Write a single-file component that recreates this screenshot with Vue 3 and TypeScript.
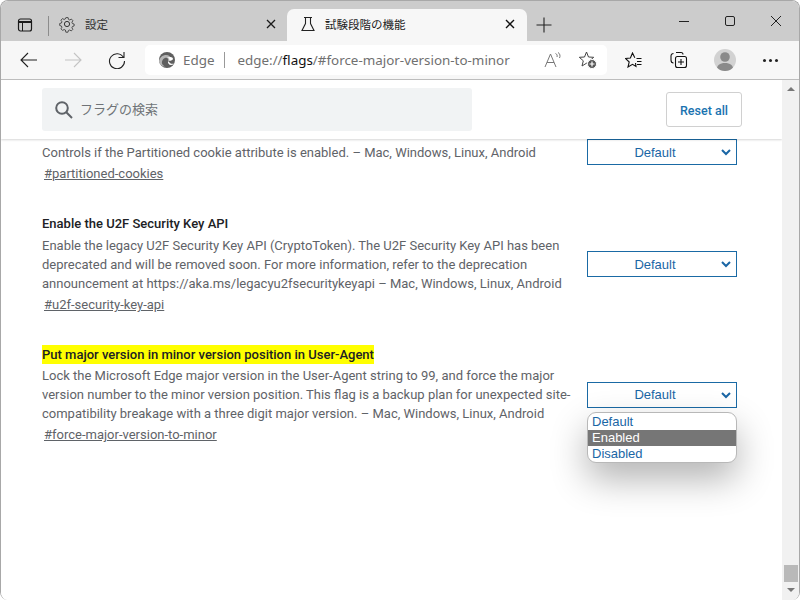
<script setup lang="ts">
interface Flag {
  title: string
  lines: string[]
  anchor: string
  highlight?: boolean
  open?: boolean
}

const flags: Flag[] = [
  {
    title: 'Partitioned cookies',
    lines: ['Controls if the Partitioned cookie attribute is enabled. – Mac, Windows, Linux, Android'],
    anchor: '#partitioned-cookies',
  },
  {
    title: 'Enable the U2F Security Key API',
    lines: [
      'Enable the legacy U2F Security Key API (CryptoToken). The U2F Security Key API has been',
      'deprecated and will be removed soon. For more information, refer to the deprecation',
      'announcement at https://aka.ms/legacyu2fsecuritykeyapi – Mac, Windows, Linux, Android',
    ],
    anchor: '#u2f-security-key-api',
  },
  {
    title: 'Put major version in minor version position in User-Agent',
    lines: [
      'Lock the Microsoft Edge major version in the User-Agent string to 99, and force the major',
      'version number to the minor version position. This flag is a backup plan for unexpected site-',
      'compatibility breakage with a three digit major version. – Mac, Windows, Linux, Android',
    ],
    anchor: '#force-major-version-to-minor',
    highlight: true,
    open: true,
  },
]
const options = ['Default', 'Enabled', 'Disabled']
</script>

<template>
  <div class="window">
    <div class="tabstrip">
      <svg class="ic sidebar" width="16" height="16" viewBox="0 0 16 16" fill="none" stroke="#1a1a1a">
        <rect x="1.5" y="2" width="13" height="12" rx="2" stroke-width="1.2" />
        <path d="M1.5 5h13" stroke-width="2.2" />
        <path d="M5.5 5v9" stroke-width="1" />
      </svg>
      <span class="divider"></span>
      <div class="tab inactive">
        <svg width="18" height="18" viewBox="0 0 18 18" fill="none" stroke="#333" stroke-width="1">
          <circle cx="9" cy="9" r="2.6" />
          <path d="M7.6 1.500h2.800l.5 2.200 1.500.7 2-1.100 1.900 2-1.200 1.900.6 1.600 2.100.6v2.400l-2.100.7-.6 1.500 1.100 2-1.900 1.900-2-1.100-1.500.6-.6 2.100H7.600L7 16.800l-1.500-.6-2 1.100-1.900-1.900 1.100-2-.6-1.500-2.100-.7V8.800l2.100-.6.6-1.600-1.200-1.900 1.900-2 2 1.100 1.500-.7z" transform="translate(1.700 1.400) scale(.81)" />
        </svg>
        <span class="tab-title">設定</span>
        <svg class="close" width="10" height="10" viewBox="0 0 10 10" stroke="#1a1a1a" stroke-width="1.300"><path d="M1 1l8 8M9 1l-8 8" /></svg>
      </div>
      <div class="tab active">
        <svg width="16" height="16" viewBox="0 0 16 16" fill="none" stroke="#222" stroke-width="1.100">
          <path d="M4 1.500h8M5.500 1.500v6L2 14.500h12l-3.500-7v-6" />
        </svg>
        <span class="tab-title">試験段階の機能</span>
        <svg class="close" width="10" height="10" viewBox="0 0 10 10" stroke="#111" stroke-width="1.400"><path d="M1 1l8 8M9 1l-8 8" /></svg>
      </div>
      <svg class="newtab" width="16" height="16" viewBox="0 0 16 16" stroke="#222" stroke-width="1.100"><path d="M8 .5v15M.5 8h15" /></svg>
      <div class="caption">
        <svg width="12" height="12" viewBox="0 0 12 12" stroke="#222"><path d="M1 6.500h10" /></svg>
        <svg width="12" height="12" viewBox="0 0 12 12" fill="none" stroke="#222"><rect x="1.500" y="1.500" width="9" height="9" rx="1.500" /></svg>
        <svg width="12" height="12" viewBox="0 0 12 12" stroke="#222"><path d="M1 1l10 10M11 1L1 11" /></svg>
      </div>
    </div>

    <div class="toolbar">
      <svg class="back" width="18" height="16" viewBox="0 0 18 16" fill="none" stroke="#222" stroke-width="1.100"><path d="M17 8H1M8 1L1 8l7 7" /></svg>
      <svg class="forward" width="18" height="16" viewBox="0 0 18 16" fill="none" stroke="#c4c4c4" stroke-width="1.100"><path d="M1 8h16M10 1l7 7-7 7" /></svg>
      <svg class="reload" width="18" height="18" viewBox="0 0 18 18" fill="none" stroke="#222" stroke-width="1.100"><path d="M15.500 6.500A7.500 7.500 0 1 0 16.500 10M16 1v5.500h-5.500" /></svg>
      <div class="omnibox">
        <svg width="16" height="16" viewBox="0 0 16 16">
          <circle cx="8" cy="8" r="8" fill="#5f5f5f" />
          <path d="M0 9c1-4 4-6 7-6 3 0 5 2 5 4 0 1-1 2-3 2 1-2-1-4-3-3-3 1-4 5-2 7 1 1 1 1 2 1.500C3 14.500 0 12 0 9z" fill="#b5b5b5" />
          <path d="M8 6c2-.5 3 1 2 2.500 2 .5 4-.5 4-1.500C14 5 11 4 8 6z" fill="#fff" />
          <path d="M9 9c-.5 2 1 4 3 4 1 0 2-.5 3-1.500-1 .5-3 .5-4-.5z" fill="#fff" />
        </svg>
        <span class="edge">Edge</span>
        <span class="omni-sep"></span>
        <span class="url">edge://<b>flags</b>/#force-major-version-to-minor</span>
        <svg class="read" width="18" height="16" viewBox="0 0 18 16" fill="none" stroke="#777" stroke-width="1"><path d="M1 15L6.500 2 12 15M3 10.500h7" /><path d="M11.500 1.500c1.500.5 2 2 1.500 3.500M14 .5c2 1 2.500 3.500 1.500 5.500" /></svg>
        <svg class="favadd" width="18" height="18" viewBox="0 0 18 18" fill="none" stroke="#444" stroke-width="1"><path d="M7.500 1L9.500 6l5.200.3-4 3.500L12 15l-4.500-2.800L3 15l1.300-5.200-4-3.500L5.500 6z" /><circle cx="13" cy="13" r="4.500" fill="#555" stroke="#fff" /><path d="M13 10.500v5M10.500 13h5" stroke="#fff" stroke-width="1.200" /></svg>
      </div>
      <svg class="favs" width="18" height="16" viewBox="0 0 18 16" fill="none" stroke="#111" stroke-width="1.100"><path d="M9.800 5.800L7.500 1 5.400 6 .5 6.500l3.700 3.500L3 15l4.500-2.700L11 14.500 10.500 11" /><path d="M11.500 6.500h5M12 9.500h4.500M12 12.500h4.500" /></svg>
      <svg class="coll" width="18" height="18" viewBox="0 0 18 18" fill="none" stroke="#111" stroke-width="1.100"><path d="M6 1.500h5a2 2 0 0 1 2 2M3.500 2.500A2.500 2.500 0 0 0 1 5v4c0 1.500 1 3 2.500 3" /><rect x="5.500" y="5.500" width="11" height="11" rx="2" /><path d="M11 8v6M8 11h6" /></svg>
      <div class="avatar">
        <svg width="22" height="22" viewBox="0 0 22 22"><circle cx="11" cy="8" r="4.800" fill="#8a8a8a" /><path d="M2.500 22c0-6 3.500-8 8.500-8s8.500 2 8.500 8z" fill="#8a8a8a" /></svg>
      </div>
      <div class="more"><i></i><i></i><i></i></div>
    </div>

    <div class="viewport">
      <main class="page">
        <header class="search-bar">
          <div class="search">
            <svg width="20" height="20" viewBox="0 0 20 20" fill="none" stroke="#5f6368" stroke-width="2"><circle cx="8" cy="8" r="5.800" /><path d="M12.300 12.300L18 18" /></svg>
            <span>フラグの検索</span>
          </div>
          <button class="reset">Reset all</button>
        </header>
        <section class="list">
          <article v-for="f in flags" :key="f.anchor" class="flag">
            <div class="info">
              <h3 class="title" :class="{ tight: f.highlight }"><span :class="{ mark: f.highlight }">{{ f.title }}</span></h3>
              <p v-for="l in f.lines" :key="l" class="desc">{{ l }}</p>
              <a class="anchor">{{ f.anchor }}</a>
            </div>
            <div class="select-wrap">
              <div class="select">
                <span>Default</span>
                <svg width="10" height="7" viewBox="0 0 10 7" fill="none" stroke="#1a66a5" stroke-width="2"><path d="M1 1l4 4 4-4" /></svg>
              </div>
              <div v-if="f.open" class="menu">
                <div v-for="o in options" :key="o" class="option" :class="{ selected: o === 'Enabled' }">{{ o }}</div>
              </div>
            </div>
          </article>
        </section>
      </main>
      <aside class="scrollbar">
        <i class="arrow up"></i>
        <span class="track"></span>
        <span class="thumb"></span>
        <i class="arrow down"></i>
      </aside>
    </div>
  </div>
</template>

<style>
html, body { margin: 0; padding: 0; background: #fff; }
</style>

<style scoped>
.window {
  width: 800px;
  height: 600px;
  box-sizing: border-box;
  border: 1px solid #a8a8a8;
  border-bottom: 0;
  border-radius: 8px;
  overflow: hidden;
  display: flex;
  flex-direction: column;
  font-family: Roboto, "Noto Sans CJK JP", sans-serif;
}
.tabstrip {
  height: 40px;
  flex: none;
  background: #cccccc;
  display: flex;
  align-items: flex-end;
  position: relative;
}
.sidebar { margin: 0 0 8px 16px; }
.divider { width: 1px; height: 20px; background: #8c8c8c; margin: 0 0 5px 15px; align-self: flex-end; }
.tab {
  height: 32px;
  box-sizing: border-box;
  display: flex;
  align-items: center;
  font-size: 11.500px;
  color: #333;
}
.tab-title { flex: 1; font-family: "Noto Sans CJK JP", sans-serif; letter-spacing: 0; }
.inactive { width: 238px; padding: 0 11px 3px 9px; gap: 9px; }
.active {
  width: 240px;
  padding: 0 12px 3px 13px;
  gap: 9px;
  background: #f7f7f7;
  border-radius: 7px 7px 0 0;
  color: #222;
}
.newtab { margin: 0 0 8px 9px; }
.caption {
  margin-left: auto;
  display: flex;
  gap: 34px;
  padding: 0 17px 14px 0;
  align-self: flex-end;
}
.toolbar {
  height: 39px;
  flex: none;
  box-sizing: border-box;
  background: #f7f7f7;
  border-bottom: 1px solid #bdbdbd;
  display: flex;
  align-items: center;
}
.back { margin-left: 19px; }
.forward { margin-left: 26px; }
.reload { margin-left: 26px; }
.omnibox {
  margin-left: 19px;
  width: 462px;
  height: 30px;
  box-sizing: border-box;
  background: #fff;
  border-radius: 5px;
  display: flex;
  align-items: center;
  padding-left: 14px;
  font-family: "Noto Sans", sans-serif;
  font-size: 13.400px;
  color: #707070;
}
.edge { margin-left: 8px; }
.omni-sep { width: 1px; height: 16px; background: #999; margin: 0 12px 0 10px; }
.url { color: #707070; white-space: nowrap; }
.url b { font-weight: 400; color: #111; }
.read { margin-left: 34px; }
.favadd { margin-left: 17px; }
.favs { margin-left: 18px; }
.coll { margin-left: 27px; }
.avatar {
  margin-left: 26px;
  width: 22px;
  height: 22px;
  border-radius: 50%;
  background: #d2d2d2;
  overflow: hidden;
}
.avatar svg { display: block; }
.more { margin-left: 27px; display: flex; gap: 3px; }
.more i { width: 3px; height: 3px; border-radius: 50%; background: #222; }
.viewport { flex: 1; display: flex; min-height: 0; }
.page { flex: 1; min-width: 0; background: #fff; overflow: hidden; position: relative; }
.search-bar {
  position: relative;
  z-index: 2;
  height: 59px;
  background: #fff;
  box-shadow: 0 1px 2px rgba(0, 0, 0, .16);
  display: flex;
  padding-left: 41px;
  padding-top: 8px;
  box-sizing: border-box;
}
.search {
  width: 430px;
  height: 43px;
  background: #f1f3f4;
  border-radius: 3px;
  display: flex;
  align-items: center;
  padding-left: 12px;
  box-sizing: border-box;
  gap: 6px;
  font-size: 13px;
  color: #6f7377;
  font-family: "Noto Sans CJK JP", sans-serif;
}
.search span { padding-bottom: 2px; }
.reset {
  margin: 4px 0 0 194px;
  width: 76px;
  height: 35px;
  background: #fff;
  border: 1px solid #d0d0d0;
  border-radius: 3px;
  color: #1a73b0;
  font: 500 12.500px Roboto, sans-serif;
  padding: 2px 0 0;
}
.list { padding-left: 41px; margin-top: -18px; }
.flag {
  display: flex;
  align-items: center;
  width: 695px;
  justify-content: space-between;
  margin-bottom: 31px;
}
.info { width: 535px; }
.title {
  margin: 0;
  font: 500 13px/19px Roboto, sans-serif;
  color: #202124;
  padding-bottom: 3px;
}
.title.tight { padding-bottom: 2px; }
.mark { background: #ffff00; padding: 2px 0; }
.desc {
  margin: 0;
  font: 13px/19px Roboto, sans-serif;
  color: #5f6368;
  white-space: nowrap;
}
.anchor {
  display: inline-block;
  margin: 2px 0 0 2px;
  font: 13px/19px Roboto, sans-serif;
  color: #5f6368;
  text-decoration: underline;
}
.select-wrap { width: 150px; position: relative; }
.select {
  height: 26px;
  box-sizing: border-box;
  border: 1px solid #1a6aa5;
  padding-right: 14px;
  display: flex;
  align-items: center;
  position: relative;
  justify-content: center;
  font: 13px "Liberation Sans", sans-serif;
  color: #1a66a5;
}
.select svg { position: absolute; right: 5px; top: 9px; }
.menu {
  position: absolute;
  z-index: 3;
  top: 30px;
  left: 0;
  width: 150px;
  box-sizing: border-box;
  border: 1px solid #b8b8b8;
  border-radius: 9px;
  background: #fff;
  overflow: hidden;
  box-shadow: 0 16px 36px rgba(0, 0, 0, .3);
  padding: 1px 0 0;
}
.option {
  font: 13px/16px "Liberation Sans", sans-serif;
  color: #1a66a5;
  padding-left: 4px;
}
.selected { background: #767676; color: #fff; }
.scrollbar {
  width: 17px;
  flex: none;
  background: #f1f1f1;
  display: flex;
  flex-direction: column;
  align-items: center;
  position: relative;
}
.track { flex: 1; }
.arrow { width: 0; height: 0; border-left: 4px solid transparent; border-right: 4px solid transparent; }
.up { margin-top: 7px; border-bottom: 4px solid #777; }
.down { margin: 6px 0 8px; border-top: 4px solid #777; }
.thumb { width: 14px; height: 17px; background: #b9b9b9; }
</style>
